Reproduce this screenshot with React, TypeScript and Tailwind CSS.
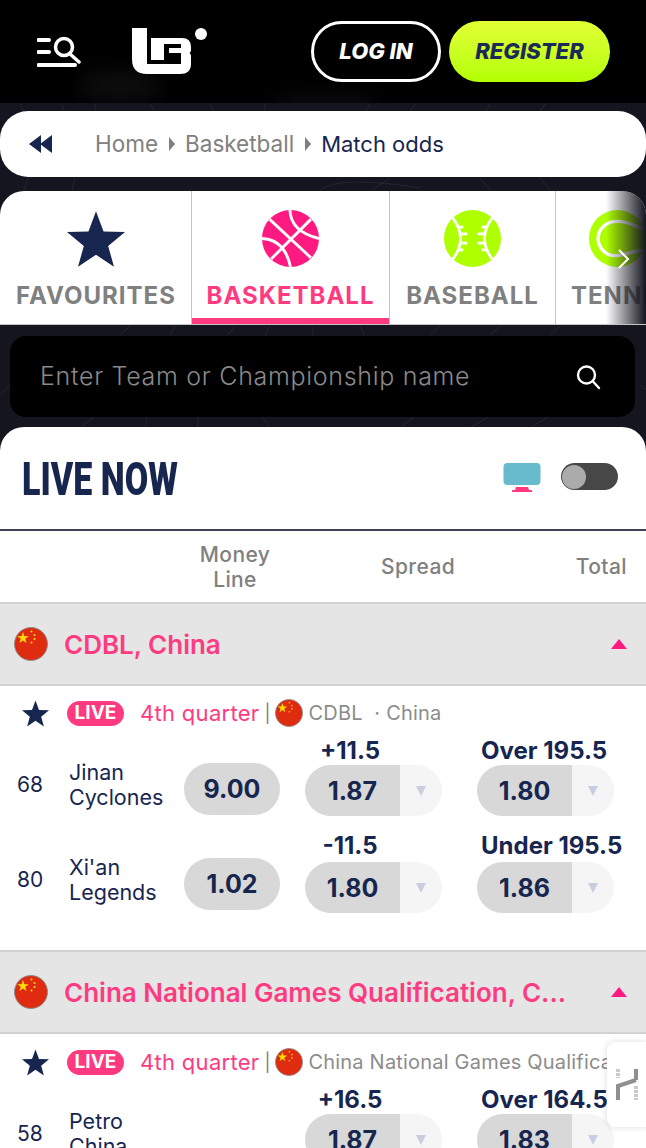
import React from "react";

const NAVY = "#17264f";

function Flag({ size }: { size: number }) {
  return (
    <svg width={size} height={size} viewBox="0 0 34 34" className="shrink-0">
      <circle cx="17" cy="17" r="16.5" fill="#df2c10" stroke="#8d8d8d" strokeWidth="1" />
      <polygon points="9,5 10.4,9.2 14.8,9.2 11.2,11.8 12.6,16 9,13.4 5.4,16 6.8,11.8 3.2,9.2 7.6,9.2" fill="#ffde00" />
      <circle cx="17.5" cy="4.5" r="1" fill="#ffde00" />
      <circle cx="20.5" cy="8" r="1" fill="#ffde00" />
      <circle cx="20.5" cy="12" r="1" fill="#ffde00" />
      <circle cx="17.5" cy="15.5" r="1" fill="#ffde00" />
    </svg>
  );
}

function Star({ size }: { size: number }) {
  return (
    <svg width={size} height={size} viewBox="0 0 100 100" className="shrink-0">
      <polygon points="50,2 63,37 100,38 71,62 81,98 50,77 19,98 29,62 0,38 37,37" fill={NAVY} />
    </svg>
  );
}

function Basket() {
  return (
    <svg width="57" height="57" viewBox="0 0 100 100">
      <defs>
        <clipPath id="bc"><circle cx="50" cy="50" r="50" /></clipPath>
      </defs>
      <circle cx="50" cy="50" r="50" fill="#ff1a82" />
      <g clipPath="url(#bc)" stroke="#fff" strokeWidth="5" fill="none">
        <path d="M13 16 L86 84" />
        <path d="M16 86 L86 16" />
        <path d="M49 0 Q50 38 100 50" />
        <path d="M0 50 Q40 52 50 100" />
      </g>
    </svg>
  );
}

function Baseball() {
  return (
    <svg width="57" height="57" viewBox="0 0 100 100">
      <defs>
        <clipPath id="bs"><circle cx="50" cy="50" r="50" /></clipPath>
      </defs>
      <circle cx="50" cy="50" r="50" fill="#aeff00" />
      <g clipPath="url(#bs)" stroke="#fff" strokeWidth="5" fill="none">
        <path d="M14 12 Q44 50 14 88" />
        <path d="M86 12 Q56 50 86 88" />
        <path d="M24 30 H34 M30 42 H41 M30 58 H41 M24 70 H34" />
        <path d="M76 30 H66 M70 42 H59 M70 58 H59 M76 70 H66" />
      </g>
    </svg>
  );
}

function Tennis() {
  return (
    <svg width="57" height="57" viewBox="0 0 100 100">
      <circle cx="50" cy="50" r="50" fill="#aeff00" />
      <path d="M100 35 C85 30 70 20 50 20 C30 20 16 33 16 50 C16 67 30 80 45 80 C65 80 80 68 100 72" stroke="#fff" strokeWidth="6" fill="none" />
    </svg>
  );
}

function Tab({ label, icon, active, width }: { label: string; icon: React.ReactNode; active?: boolean; width: string }) {
  return (
    <div className={`relative flex h-full shrink-0 flex-col items-center border-r border-[#c4c4c4] pt-[19px] ${width}`}>
      <div className="flex h-[62px] items-start justify-center">{icon}</div>
      <div className={`mt-[9px] whitespace-nowrap text-[24px] font-bold leading-[30px] tracking-[1px] ${active ? "text-[#ff3a80]" : "text-[#808080]"}`}>
        {label}
      </div>
      {active && <div className="absolute bottom-0 left-0 right-0 h-[6px] bg-[#ff3a80]" />}
    </div>
  );
}

function Pill({ value, label, labelGap }: { value: string; label: string; labelGap: string }) {
  return (
    <div className={`flex h-[51px] w-[137px] overflow-hidden rounded-full ${labelGap}`}>
      <div className="flex w-[95px] items-center justify-center bg-[#d8d8d8] pt-[3px] text-[25px] font-bold" style={{ color: NAVY }}>
        {value}
      </div>
      <div className="flex flex-1 items-center justify-center bg-[#f5f5f5]">
        <div className="h-0 w-0 border-x-[5px] border-t-[10px] border-x-transparent border-t-[#c9cde0]" aria-label={label} />
      </div>
    </div>
  );
}

type Row = {
  score: string;
  team: [string, string];
  money?: string;
  spreadLabel: string;
  spread: string;
  totalLabel: string;
  total: string;
  gap: string;
};

function MatchRow({ r }: { r: Row }) {
  return (
    <div className="flex h-[95px] items-start pl-[17px]" style={{ color: NAVY }}>
      <div className="mt-[34px] w-[52px] text-[21px] leading-[28px]">{r.score}</div>
      <div className="mt-[23px] w-[115px] text-[21.5px] leading-[25px]">
        <div>{r.team[0]}</div>
        <div>{r.team[1]}</div>
      </div>
      <div className="mt-[26px] w-[96px]">
        {r.money && (
          <div className="flex h-[52px] items-center justify-center rounded-full bg-[#d8d8d8] pt-[1px] text-[25px] font-bold">{r.money}</div>
        )}
      </div>
      <div className="ml-[25px] w-[137px]">
        <div className="h-[26px] w-[90px] text-center text-[24px] font-bold leading-[28px]">{r.spreadLabel}</div>
        <Pill value={r.spread} label="spread" labelGap={r.gap} />
      </div>
      <div className="ml-[35px] w-[137px]">
        <div className="h-[26px] whitespace-nowrap pl-[4px] text-[24px] font-bold leading-[28px]">{r.totalLabel}</div>
        <Pill value={r.total} label="total" labelGap={r.gap} />
      </div>
    </div>
  );
}

function LeagueHeader({ title }: { title: string }) {
  return (
    <div className="flex h-[84px] items-center border-y-2 border-[#d2d2d2] bg-[#e5e5e5] pl-[14px] pr-[19px]">
      <Flag size={34} />
      <div className="ml-[16px] flex-1 whitespace-nowrap text-[26px] font-semibold text-[#ff3a80]">{title}</div>
      <div className="h-0 w-0 border-x-[8px] border-b-[10px] border-x-transparent border-b-[#ff1a82]" />
    </div>
  );
}

function Meta({ text }: { text: React.ReactNode }) {
  return (
    <div className="flex h-[28px] items-center overflow-hidden whitespace-nowrap pl-[22px]">
      <Star size={27} />
      <div className="ml-[18px] flex h-[25px] w-[57px] shrink-0 items-center justify-center rounded-full bg-[#ff3a80] text-[19px] font-bold text-white">
        LIVE
      </div>
      <div className="ml-[16px] text-[22px] tracking-[0.3px] text-[#ff3a80]">4th quarter</div>
      <div className="ml-[5px] mr-[5px] text-[18px] text-[#808080]">|</div>
      <Flag size={28} />
      <div className="ml-[5px] text-[20px] tracking-[0.2px] text-[#8c8c8c]">{text}</div>
    </div>
  );
}

export default function App() {
  return (
    <div
      className="relative h-[1148px] w-[646px] overflow-hidden bg-[#14151f]"
      style={{ fontFamily: "Inter, 'Noto Sans', sans-serif" }}
    >
      <svg className="absolute inset-0" width="646" height="430" fill="none" stroke="#ffffff" strokeOpacity="0.07" strokeWidth="1">
        <path d="M20 104 L24 112 M62 104 L64 112 M95 104 L96 112 M150 104 L155 112 M210 104 L214 112 M265 104 L265 112 M370 104 L366 112 M415 104 L410 112 M490 104 L486 112 M545 104 L540 112" />
        <path d="M28 178 L24 190 M75 178 L72 190 M320 190 Q340 175 420 188 M390 178 L372 190 M480 178 L490 190 M540 178 L550 190" />
        <path d="M130 326 L120 335 M175 326 L170 335 M235 326 L228 335 M270 326 L265 335 M312 326 L313 335 M360 326 L364 335 M440 326 L430 335 M500 326 L490 335 M560 326 L550 335" />
        <path d="M0 395 L10 385 M640 385 L646 390 M80 428 L95 416 M145 428 L147 416 M198 428 L198 416 M270 428 L262 416 M400 428 L415 416 M470 428 L490 416 M530 428 L550 416" />
      </svg>

      <div className="relative flex flex-col">
        {/* Header */}
        <header className="relative flex h-[103px] items-start overflow-hidden bg-black pl-[37px]">
          <div className="absolute left-[85px] top-[78px] h-[16px] w-[70px] bg-[#181818] blur-md" />
          <div className="absolute left-[280px] top-[102px] h-[14px] w-[90px] bg-[#181818] blur-md" />
          <svg width="44" height="33" viewBox="0 0 44 33" className="relative mt-[36px]" fill="none" stroke="#fff" strokeLinecap="round">
            <path d="M1.5 4 H12 M1.5 16 H12" strokeWidth="4" />
            <path d="M1.5 29 H38" strokeWidth="4" />
            <circle cx="27" cy="11" r="8.5" strokeWidth="3.5" />
            <path d="M33 18 L42 26" strokeWidth="3.5" />
          </svg>
          <svg width="78" height="48" viewBox="0 0 78 48" className="relative ml-[50px] mt-[27px]">
            <path
              fill="#fff"
              fillRule="evenodd"
              d="M1 1 H16 V11 H51 Q60 11 60 20 V23 Q60 25 58.5 26 Q60 27 60 29 V37 Q60 47 49 47 H16 Q1 47 1 32 Z M16 11 H20 V33 H33 V17 H50 V21 H38 V26 H50 V37 H16 Z"
            />
            <circle cx="70" cy="7" r="6" fill="#fff" />
          </svg>
          <div className="relative ml-[102px] mt-[21px] flex h-[61px] w-[130px] items-center justify-center rounded-full border-[3px] border-white text-[22px] font-extrabold italic text-white">
            LOG IN
          </div>
          <div
            className="relative ml-[8px] mt-[21px] flex h-[61px] w-[161px] items-center justify-center rounded-full bg-gradient-to-b from-[#e2ff34] to-[#b3ff00] text-[22px] font-extrabold italic"
            style={{ color: "#1c2a58" }}
          >
            REGISTER
          </div>
        </header>

        {/* Breadcrumb */}
        <nav className="mt-[8px] flex h-[66px] items-center rounded-[28px] bg-white pl-[28px]">
          <svg width="25" height="18" viewBox="0 0 25 18">
            <path d="M13 0 V18 L1 9 Z M24 0 V18 L12 9 Z" fill={NAVY} />
          </svg>
          <span className="ml-[42px] text-[22.5px] text-[#808080]">Home</span>
          <span className="ml-[11px] h-0 w-0 border-y-[7px] border-l-[6px] border-y-transparent border-l-[#808080]" />
          <span className="ml-[10px] text-[22.5px] text-[#808080]">Basketball</span>
          <span className="ml-[11px] h-0 w-0 border-y-[7px] border-l-[6px] border-y-transparent border-l-[#808080]" />
          <span className="ml-[10px] text-[22px]" style={{ color: NAVY }}>Match odds</span>
        </nav>

        {/* Sports tabs */}
        <div className="relative mt-[14px] flex h-[134px] overflow-hidden rounded-t-[24px] border-b border-[#c4c4c4] bg-white pl-[1px]">
          <Tab width="w-[191px]" label="FAVOURITES" icon={<Star size={58} />} />
          <Tab width="w-[198px]" label="BASKETBALL" active icon={<Basket />} />
          <Tab width="w-[166px]" label="BASEBALL" icon={<Baseball />} />
          <div className="flex w-[120px] shrink-0 flex-col pl-[15px] pt-[19px]">
            <div className="flex h-[62px] items-start pl-[18px]"><Tennis /></div>
            <div className="mt-[9px] text-[24px] font-bold leading-[30px] tracking-[1px] text-[#808080]">TENNIS</div>
          </div>
          <div className="absolute bottom-0 right-0 top-0 flex w-[40px] items-center justify-end bg-gradient-to-r from-[#ffffff00] to-[#14151f]">
            <svg width="14" height="22" viewBox="0 0 14 22" className="mr-[15px] mt-[3px]" fill="none" stroke="#fff" strokeWidth="2">
              <path d="M2 2 L11 11 L2 20" />
            </svg>
          </div>
        </div>

        {/* Search */}
        <div className="ml-[10px] mt-[11px] flex h-[81px] w-[625px] items-center justify-between rounded-[16px] bg-black pl-[30px] pr-[34px]">
          <span className="text-[25px] font-light tracking-[0.7px] text-[#8a8a8a]">Enter Team or Championship name</span>
          <svg width="26" height="26" viewBox="0 0 26 26" fill="none" stroke="#fff" strokeWidth="2.4" strokeLinecap="round">
            <circle cx="11.5" cy="11" r="8.5" />
            <path d="M18 17.5 L24 24" />
          </svg>
        </div>

        {/* Main card */}
        <main className="mt-[10px] rounded-t-[24px] bg-white">
          <div className="flex h-[104px] items-start border-b-2 border-[#3d4152] pl-[22px]">
            <h1
              className="mt-[23px] origin-left scale-x-[0.74] whitespace-nowrap text-[46px] font-black leading-[58px]"
              style={{ color: NAVY, fontFamily: "'Roboto', 'Liberation Sans', sans-serif" }}
            >
              LIVE NOW
            </h1>
            <div className="ml-auto mt-[36px] flex items-start pr-[28px]">
              <svg width="38" height="30" viewBox="0 0 38 30">
                <rect x="0.5" y="0" width="37" height="22" rx="4" fill="#68bacd" />
                <path d="M13 24 H25 L26 27 H29 V29 H9 V27 H12 Z" fill="#ff3a80" />
              </svg>
              <div className="ml-[20px] flex h-[27px] w-[57px] items-center rounded-full bg-[#474747] pl-[1px]">
                <div className="h-[24px] w-[24px] rounded-full bg-[#ababab]" />
              </div>
            </div>
          </div>

          <div className="flex h-[71px] items-center text-[21px] font-medium leading-[25px] tracking-[0.4px] text-[#808080]">
            <div className="ml-[195px] w-[80px] text-center">Money<br />Line</div>
            <div className="ml-[106px]">Spread</div>
            <div className="ml-auto pr-[19px]">Total</div>
          </div>

          <LeagueHeader title="CDBL, China" />
          <div className="h-[264px] pt-[13px]">
            <Meta text={<>CDBL&nbsp;&nbsp;·&nbsp;China</>} />
            <div className="mt-[10px]">
              <MatchRow r={{ score: "68", team: ["Jinan", "Cyclones"], money: "9.00", spreadLabel: "+11.5", spread: "1.87", totalLabel: "Over 195.5", total: "1.80", gap: "mt-[2px]" }} />
              <MatchRow r={{ score: "80", team: ["Xi'an", "Legends"], money: "1.02", spreadLabel: "-11.5", spread: "1.80", totalLabel: "Under 195.5", total: "1.86", gap: "mt-[4px]" }} />
            </div>
          </div>

          <LeagueHeader title="China National Games Qualification, C..." />
          <div className="pt-[14px]">
            <Meta text="China National Games Qualification, China" />
            <div className="mt-[10px]">
              <MatchRow r={{ score: "58", team: ["Petro", "China"], spreadLabel: "+16.5", spread: "1.87", totalLabel: "Over 164.5", total: "1.83", gap: "mt-[2px]" }} />
            </div>
          </div>
        </main>
      </div>

      {/* Floating widget */}
      <div className="absolute right-0 top-[1042px] flex h-[85px] w-[39px] items-center justify-center rounded-l-[8px] bg-white shadow-[0_0_6px_rgba(0,0,0,0.15)]">
        <svg width="24" height="34" viewBox="0 0 24 34" fill="none" strokeWidth="4">
          <path d="M3 1 V10" stroke="#c9c9c9" strokeDasharray="3 1" />
          <path d="M21 1 V12" stroke="#8f8f8f" />
          <path d="M3 32 V18 L21 12" stroke="#8f8f8f" />
          <path d="M21 18 V32" stroke="#c9c9c9" strokeDasharray="3 1" />
        </svg>
      </div>
    </div>
  );
}
